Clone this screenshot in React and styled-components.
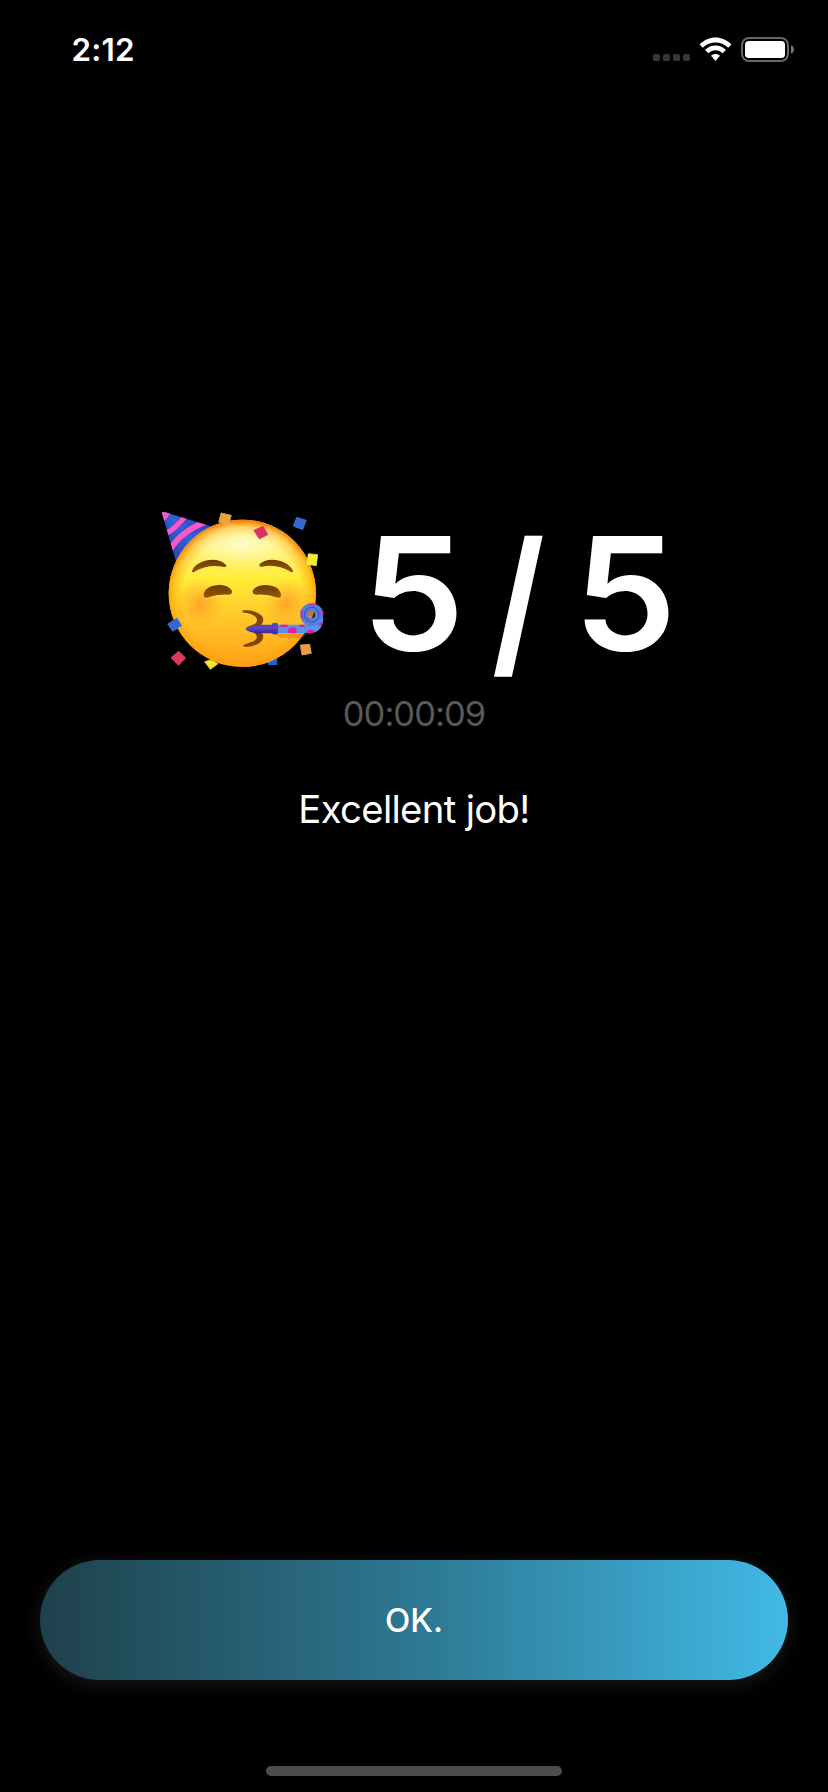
import React from "react";
import styled, { createGlobalStyle } from "styled-components";

const GlobalStyle = createGlobalStyle`
  *, *::before, *::after { box-sizing: border-box; }
  html, body { margin: 0; padding: 0; background: #000; }
`;

const Screen = styled.main`
  display: flex;
  flex-direction: column;
  width: 828px;
  height: 1792px;
  overflow: hidden;
  background: #000;
  color: #fff;
  font-family: Inter, "Liberation Sans", sans-serif;
`;

const StatusBar = styled.header`
  display: flex;
  justify-content: space-between;
  align-items: flex-start;
  height: 88px;
  padding: 30px 34px 0 71.5px;
`;

const Clock = styled.time`
  font-size: 31.5px;
  line-height: 40px;
  font-weight: 600;
  letter-spacing: 0.2px;
`;

const StatusIcons = styled.svg`
  display: block;
  width: 142px;
  height: 26px;
  margin-top: 6px;
`;

const Result = styled.section`
  display: flex;
  flex: 1;
  flex-direction: column;
  align-items: center;
  padding-top: 412px;
`;

const ScoreRow = styled.div`
  display: flex;
  align-items: flex-start;
  width: 528px;
  height: 180px;
`;

const PartyFace = styled.svg`
  display: block;
  flex: none;
  width: 190px;
  height: 180px;
`;

const Score = styled.h1`
  display: flex;
  margin: 0 0 0 24px;
  font-size: 157px;
  line-height: 187px;
  font-weight: 600;
`;

const ScoreGlyph = styled.span`
  display: block;
  width: ${(p) => p.$width}px;
  text-align: center;
  transform: ${(p) => p.$shape};
`;

const Elapsed = styled.p`
  margin: 13px 0 0;
  font-size: 34.5px;
  line-height: 42px;
  font-weight: 400;
  letter-spacing: -0.95px;
  color: #595959;
`;

const Praise = styled.p`
  margin: 50px 0 0;
  font-size: 38.3px;
  line-height: 48px;
  font-weight: 400;
  letter-spacing: -0.68px;
`;

const Footer = styled.footer`
  display: flex;
  flex-direction: column;
  align-items: center;
  height: 232px;
  padding: 0 40px;
`;

const ConfirmButton = styled.button`
  width: 100%;
  height: 120px;
  padding: 0;
  border: 0;
  border-radius: 60px;
  background: linear-gradient(90deg, #1f414c 0%, #2d7791 50%, #41b9e6 100%);
  box-shadow: 0 4px 20px rgba(255, 255, 255, 0.1);
  color: #fff;
  font: 500 33px/40px Inter, "Liberation Sans", sans-serif;
`;

const HomeIndicator = styled.div`
  width: 296px;
  height: 10px;
  margin-top: 86px;
  border-radius: 5px;
  background: #4d4d4d;
`;

function StatusGlyphs() {
  return (
    <StatusIcons viewBox="0 0 142 26" aria-hidden="true">
      <g fill="#363636">
        <rect x="1" y="18" width="7" height="7" rx="1.6" />
        <rect x="11" y="18" width="7" height="7" rx="1.6" />
        <rect x="21" y="18" width="7" height="7" rx="1.6" />
        <rect x="31" y="18" width="7" height="7" rx="1.6" />
      </g>
      <g fill="#fff">
        <path d="M47.6 8.4C56.4-.9 70.6-.9 79.4 8.4L76.2 11.7C69.4 4.7 57.6 4.7 50.8 11.7Z" />
        <path d="M53.1 13.9C58.8 8 68.2 8 73.9 13.9L70.6 17.2C66.6 13.3 60.4 13.3 56.4 17.2Z" />
        <path d="M59 19.8C61.6 17.3 65.4 17.3 68 19.8L63.5 25Z" />
      </g>
      <rect x="90" y="2" width="46" height="23" rx="7" fill="none" stroke="#666" strokeWidth="2" />
      <rect x="93" y="5" width="40" height="17" rx="3.8" fill="#fff" />
      <path d="M139 9.3Q142 10.6 142 13.5T139 17.7Z" fill="#777" />
    </StatusIcons>
  );
}

function PartyEmoji() {
  return (
    <PartyFace viewBox="0 0 570 540" role="img" aria-label="Partying face">
      <defs>
        <linearGradient id="skin" x1="0" y1="0" x2="0" y2="1">
          <stop offset="0" stopColor="#fff8a8" />
          <stop offset=".2" stopColor="#fff582" />
          <stop offset=".4" stopColor="#ffec37" />
          <stop offset=".62" stopColor="#ffcc2b" />
          <stop offset="1" stopColor="#ffa018" />
        </linearGradient>
        <radialGradient id="rim" cx=".5" cy=".53" r=".52">
          <stop offset=".78" stopColor="#ff9800" stopOpacity="0" />
          <stop offset=".92" stopColor="#ff9b00" stopOpacity=".5" />
          <stop offset="1" stopColor="#f78200" />
        </radialGradient>
        <radialGradient id="glow">
          <stop offset="0" stopColor="#fffbd8" stopOpacity=".85" />
          <stop offset="1" stopColor="#fff9a5" stopOpacity="0" />
        </radialGradient>
        <radialGradient id="blush">
          <stop offset="0" stopColor="#ff7824" stopOpacity=".5" />
          <stop offset="1" stopColor="#ff8e20" stopOpacity="0" />
        </radialGradient>
        <linearGradient id="brown" x1="0" y1="0" x2="0" y2="1">
          <stop offset="0" stopColor="#6b3a00" />
          <stop offset="1" stopColor="#935a05" />
        </linearGradient>
        <linearGradient id="hat" gradientUnits="userSpaceOnUse" x1="55" y1="140" x2="150" y2="60">
          <stop offset="0" stopColor="#2f46b4" />
          <stop offset=".5" stopColor="#2f62d6" />
          <stop offset="1" stopColor="#3444b4" />
        </linearGradient>
        <linearGradient id="horn" x1="0" y1="0" x2="0" y2="1">
          <stop offset="0" stopColor="#5146bd" />
          <stop offset=".4" stopColor="#5c46c8" />
          <stop offset="1" stopColor="#35209a" />
        </linearGradient>
        <clipPath id="hatShape"><path d="M36 39Q36 34 43 36L190 81L79 188Z" /></clipPath>
        <clipPath id="tubeShape"><path d="M382 374H478Q510 374 519 344V365Q513 398 480 400H382Z" /></clipPath>
      </defs>
      <g clipPath="url(#hatShape)">
        <path d="M30 30H200V195H60Z" fill="url(#hat)" />
        <path d="M30 30H64Q58 50 42 63H30Z" fill="#ff57c6" />
        <g fill="none" stroke="#ff55cb" strokeWidth="15">
          <path d="M42 104Q76 88 108 46" />
          <path d="M58 152Q90 96 166 66" strokeWidth="17" />
        </g>
      </g>
      <path d="M350 472H382V495H354Z" fill="#1264dd" />
      <circle cx="277" cy="280" r="221" fill="url(#skin)" />
      <circle cx="277" cy="280" r="221" fill="url(#rim)" />
      <ellipse cx="277" cy="135" rx="165" ry="72" fill="url(#glow)" />
      <circle cx="151" cy="308" r="72" fill="url(#blush)" />
      <circle cx="410" cy="306" r="72" fill="url(#blush)" />
      <g fill="none" stroke="#ffe64b" strokeWidth="4" strokeLinecap="round" opacity=".65">
        <path d="M133 218Q173 193 224 204M333 204Q383 194 425 218M167 296Q199 285 239 287M314 287Q353 284 387 296" />
      </g>
      <g fill="url(#brown)">
        <path d="M126 212C140 180 201 167 228 194Q231 202 222 201Q174 191 132 216Q126 219 126 212Z" />
        <path d="M429 212C415 180 354 167 329 192Q326 202 336 200Q382 191 423 216Q430 219 429 212Z" />
        <path d="M161 287C160 249 235 245 246 273Q247 284 235 284Q202 282 171 293Q162 295 161 287Z" />
        <path d="M393 287C394 249 319 245 308 273Q307 284 319 284Q353 282 383 293Q392 295 393 287Z" />
      </g>
      <path d="M280 335C307 334 331 343 333 361Q334 374 311 384Q334 395 333 407C331 426 306 431 282 437" fill="none" stroke="#ffe13d" strokeWidth="7" opacity=".7" transform="translate(-3 4)" />
      <path d="M277 334Q277 330 286 331C317 331 340 344 340 359Q340 375 316 386Q340 399 340 408C340 428 316 439 287 441Q278 441 280 436Q287 431 302 427Q324 420 320 408Q316 397 290 387L290 381Q323 373 321 360C320 349 306 340 282 338Q278 338 277 334Z" fill="#804500" />
      <path d="M378 402H470L455 413H390Z" fill="#e06b00" opacity=".4" />
      <path d="M382 374H478Q510 374 519 344V365Q513 398 480 400H382Z" fill="#5b90ec" />
      <g fill="#e61ba3" clipPath="url(#tubeShape)">
        <ellipse cx="402" cy="376" rx="12" ry="6" />
        <ellipse cx="427" cy="393" rx="13" ry="11" />
        <ellipse cx="456" cy="376" rx="9" ry="5" />
        <ellipse cx="482" cy="398" rx="12" ry="9" />
        <circle cx="511" cy="372" r="5" />
      </g>
      <circle cx="485" cy="344" r="22" fill="none" stroke="#4f80e0" strokeWidth="25" />
      <circle cx="485" cy="344" r="22" fill="none" stroke="#4146b0" strokeWidth="3" />
      <g fill="none" stroke="#df24ab" strokeLinecap="round">
        <path d="M455 333Q453 342 457 352" strokeWidth="6" />
        <path d="M481 314Q488 312 493 314" strokeWidth="5" />
        <path d="M514 328Q518 335 518 342" strokeWidth="5" />
        <path d="M471 355Q473 358 478 360" strokeWidth="4" />
      </g>
      <path d="M473 342L480 331L492 339L486 354Z" fill="#ce731e" />
      <path d="M286 386Q303 376 330 374H373V400H330Q304 400 288 389Z" fill="url(#horn)" />
      <rect x="367" y="370" width="16" height="32" rx="4" fill="url(#horn)" stroke="#4930b1" strokeWidth="2" />
      <g strokeWidth="2" strokeLinejoin="round">
        <path d="M213 39L244 46L236 74L206 66Z" fill="#eda03c" stroke="#f3b453" />
        <path d="M311 91L339 78L354 104L328 117Z" fill="#da2f62" stroke="#e93d61" />
        <path d="M440 52L469 61L458 89L430 78Z" fill="#3269cf" stroke="#477bda" />
        <path d="M475 161L503 164L499 197L470 193Z" fill="#f3ec35" stroke="#f8f45b" />
        <path d="M53 372L81 354L95 377L68 394Z" fill="#3069d0" stroke="#427bde" />
        <path d="M63 473L86 454L107 474L86 496Z" fill="#dc365a" stroke="#ed546b" />
        <path d="M164 485L181 480L204 491L181 508Z" fill="#f5e62b" stroke="#fff04d" />
        <path d="M451 435L479 433L484 460L456 465Z" fill="#ed9c3e" stroke="#f4b157" />
      </g>
    </PartyFace>
  );
}

export default function App() {
  return (
    <>
      <GlobalStyle />
      <Screen>
        <StatusBar>
          <Clock>2:12</Clock>
          <StatusGlyphs />
        </StatusBar>
        <Result>
          <ScoreRow>
            <PartyEmoji />
            <Score>
              <ScoreGlyph $width={100} $shape="translateX(-1px) scaleX(1.045)">5</ScoreGlyph>
              <ScoreGlyph $width={107} $shape="translate(0.5px, 7px) scale(1.02, 1.03) skewX(2.8deg)">/</ScoreGlyph>
              <ScoreGlyph $width={108} $shape="scaleX(1.045)">5</ScoreGlyph>
            </Score>
          </ScoreRow>
          <Elapsed>00:00:09</Elapsed>
          <Praise>Excellent job!</Praise>
        </Result>
        <Footer>
          <ConfirmButton type="button">OK.</ConfirmButton>
          <HomeIndicator />
        </Footer>
      </Screen>
    </>
  );
}
